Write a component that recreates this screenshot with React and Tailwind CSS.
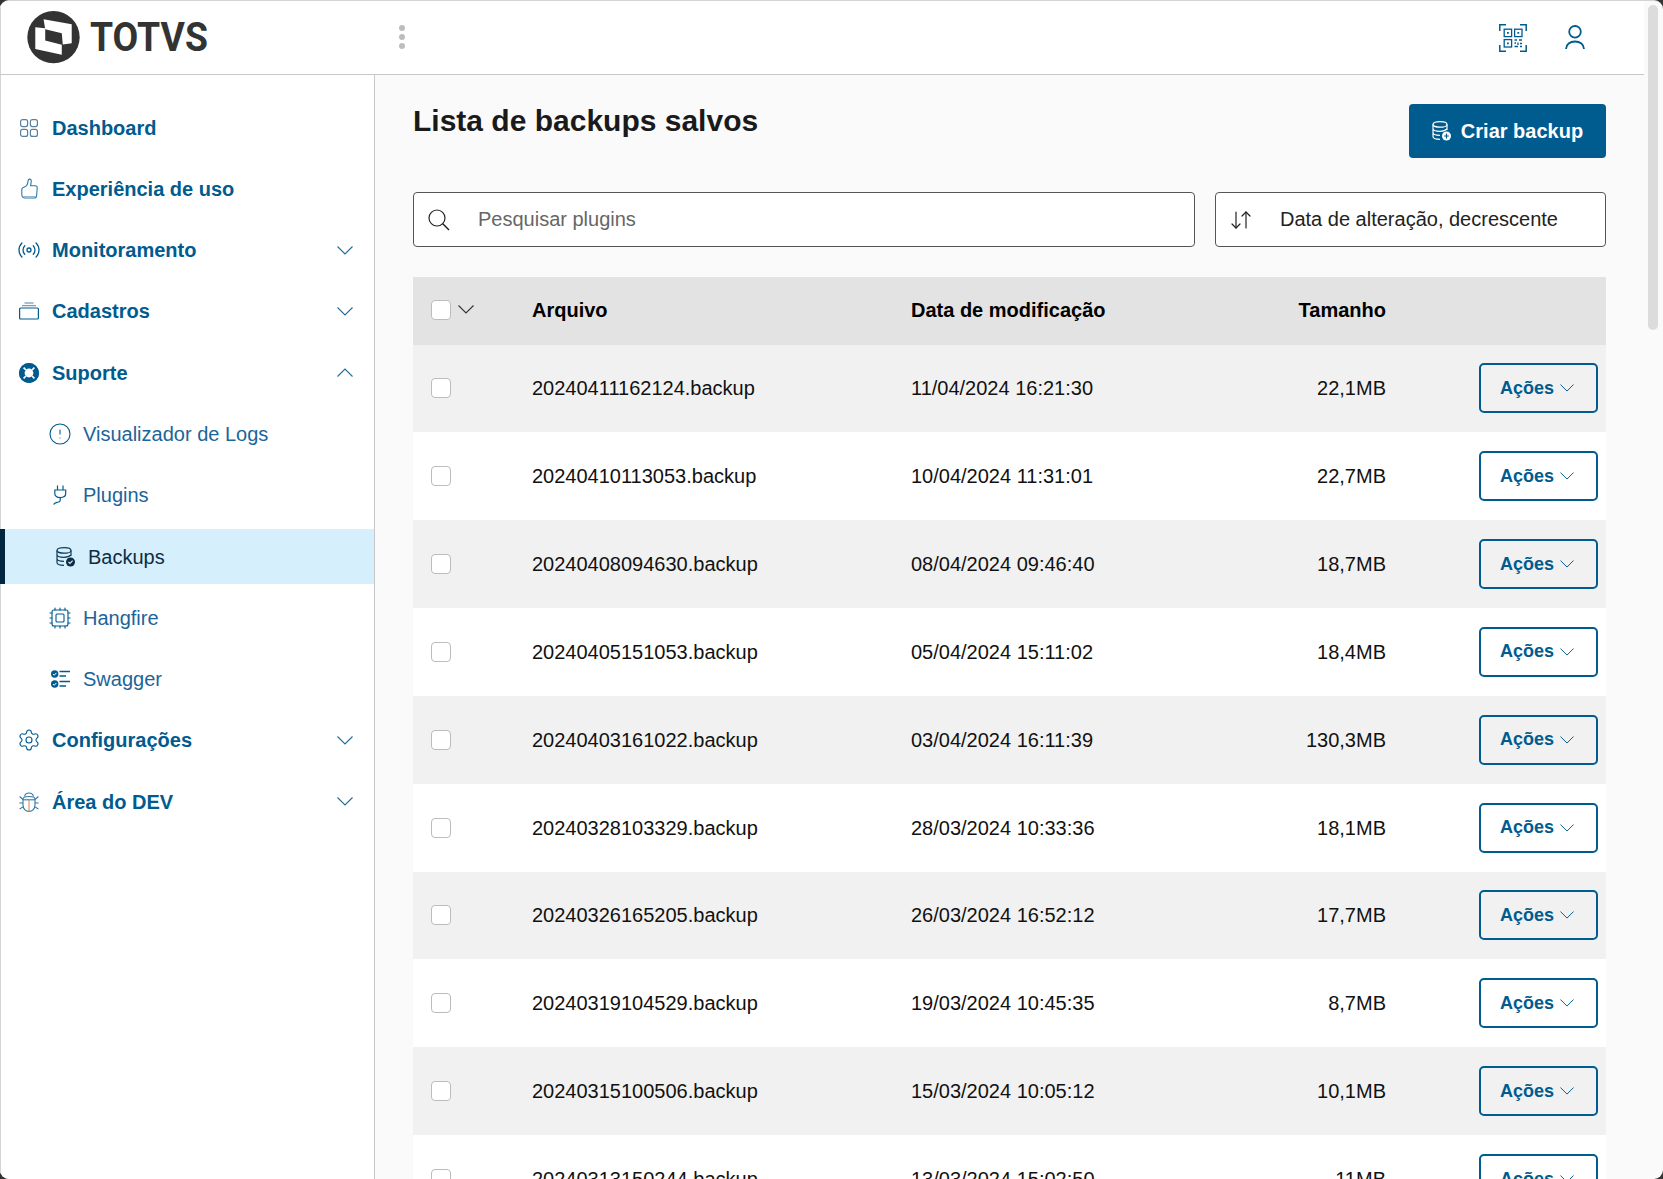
import { Radio, CircleAlert, Cpu, Settings, ArrowDownUp } from 'lucide-react'

const BLUE = '#005b8f'

const rows = [
  ['20240411162124.backup', '11/04/2024 16:21:30', '22,1MB'],
  ['20240410113053.backup', '10/04/2024 11:31:01', '22,7MB'],
  ['20240408094630.backup', '08/04/2024 09:46:40', '18,7MB'],
  ['20240405151053.backup', '05/04/2024 15:11:02', '18,4MB'],
  ['20240403161022.backup', '03/04/2024 16:11:39', '130,3MB'],
  ['20240328103329.backup', '28/03/2024 10:33:36', '18,1MB'],
  ['20240326165205.backup', '26/03/2024 16:52:12', '17,7MB'],
  ['20240319104529.backup', '19/03/2024 10:45:35', '8,7MB'],
  ['20240315100506.backup', '15/03/2024 10:05:12', '10,1MB'],
  ['20240313150244.backup', '13/03/2024 15:02:50', '11MB'],
]

function Chevron({ up, className }) {
  return (
    <svg viewBox="0 0 16 9" fill="none" stroke="currentColor" strokeWidth="1.1" className={className}>
      <path d={up ? 'M0.5 8.5L8 1l7.5 7.5' : 'M0.5 0.5L8 8l7.5-7.5'} />
    </svg>
  )
}

function Logo() {
  return (
    <svg viewBox="80 33 160 160" className="w-[53px] h-[53px] shrink-0">
      <circle cx="160" cy="112" r="79" fill="#333333" />
      <path d="M130 58L215 73V130L188 134L185 100L135 88Z" fill="#fff" />
      <path d="M105 82L135 85V122L185 135V165L105 148Z" fill="#fff" />
    </svg>
  )
}

function GridIcon() {
  return (
    <svg viewBox="0 0 18 18" fill="none" stroke="#5b7f9e" strokeWidth="1.2" className="w-[18px] h-[18px]">
      <rect x="0.6" y="0.6" width="7" height="7" rx="2" />
      <rect x="10.4" y="0.6" width="7" height="7" rx="2" />
      <rect x="0.6" y="10.4" width="7" height="7" rx="2" />
      <rect x="10.4" y="10.4" width="7" height="7" rx="2" />
    </svg>
  )
}

function ThumbIcon() {
  return (
    <svg viewBox="0 0 17 21" fill="none" stroke="#2f7aa8" strokeWidth="1.1" className="w-[17px] h-[21px]">
      <path d="M0.8 11.5C0.8 10 2 9.4 3.5 9L5.6 7.6C6.6 6.2 7 4.4 7.2 2.4C7.3 1 9.8 0.4 10.2 2.4C10.5 4 9.8 6 9.6 7.8H14.2C15.6 7.8 16.4 8.8 16.2 10L15.6 17.6C15.5 19 14.6 20 13 20H4.4C2 20 0.8 18.6 0.8 16.5Z" />
      <path d="M2.5 18.6H14.5" stroke="#9db9cc" strokeWidth="1.4" />
    </svg>
  )
}

function TrayIcon() {
  return (
    <svg viewBox="0 0 20 18" fill="none" className="w-5 h-[18px]">
      <rect x="0.6" y="6" width="18.8" height="11" rx="1" stroke={BLUE} strokeWidth="1.2" />
      <path d="M3 3.6H17" stroke="#7c9db5" strokeWidth="1.3" />
      <path d="M5.5 1H14.5" stroke="#7c9db5" strokeWidth="1.3" />
    </svg>
  )
}

function BuoyIcon() {
  return (
    <svg viewBox="0 0 20 20" className="w-5 h-5">
      <circle cx="10" cy="10" r="10" fill={BLUE} />
      <circle cx="10" cy="10" r="4.4" fill="#fff" />
      <path d="M4.6 4.6L7 7M15.4 4.6L13 7M4.6 15.4L7 13M15.4 15.4L13 13" stroke="#fff" strokeWidth="1.7" />
      <circle cx="10" cy="10" r="9.2" fill="none" stroke={BLUE} strokeWidth="1.6" />
    </svg>
  )
}

function PlugIcon() {
  return (
    <svg viewBox="0 0 14 20" fill="none" stroke={BLUE} strokeWidth="1.2" className="w-[14px] h-5">
      <path d="M4.5 0.5V5M10 0.5V5M1.8 5H12.7V8.5C12.7 11 10.5 12.5 7.2 12.5C4 12.5 1.8 11 1.8 8.5Z" />
      <path d="M7.2 12.5V15.5C7.2 17 6 17 4 17.4C2 17.8 1.2 18.2 0.6 19.5" />
    </svg>
  )
}

function ChecklistIcon() {
  return (
    <svg viewBox="0 0 19 18" className="w-[19px] h-[18px]">
      <circle cx="3.7" cy="4" r="3.7" fill={BLUE} />
      <circle cx="3.7" cy="14" r="3.7" fill={BLUE} />
      <path d="M1.9 4l1.3 1.3 2.2-2.4M1.9 14l1.3 1.3 2.2-2.4" fill="none" stroke="#fff" strokeWidth="1" />
      <path d="M8.5 1.5H19M8.5 6H15M8.5 11.5H19M8.5 16H15" stroke={BLUE} strokeWidth="1.5" />
    </svg>
  )
}

function BugIcon() {
  return (
    <svg viewBox="0 0 20 20" fill="none" stroke="#2f7aa8" strokeWidth="1.1" className="w-5 h-5">
      <path d="M5.5 4.5C6 2 7.8 1 10 1C12.2 1 14 2 14.5 4.5" />
      <path d="M4 7C4 5.4 5.4 4.5 10 4.5C14.6 4.5 16 5.4 16 7V13C16 16.5 13.5 19.4 10 19.4C6.5 19.4 4 16.5 4 13Z" />
      <path d="M4 7.8H16" />
      <path d="M10 7.8V19.4" stroke="#d98b6a" />
      <path d="M0.6 4.5L4 7.5M19.4 4.5L16 7.5M0.4 11H4M19.6 11H16M0.6 17L4.4 14.6M19.4 17L15.6 14.6" />
    </svg>
  )
}

function SearchIcon() {
  return (
    <svg viewBox="0 0 22 22" fill="none" stroke="#222" strokeWidth="1.2" className="w-[22px] h-[22px]">
      <circle cx="9" cy="9" r="8" />
      <path d="M14.8 14.8L21 21" strokeWidth="1.5" />
    </svg>
  )
}

function DbIcon({ stroke, badge, plus }) {
  return (
    <svg viewBox="0 0 19 20" fill="none" className="w-[19px] h-5">
      <ellipse cx="8" cy="3.4" rx="7" ry="2.8" stroke={stroke} strokeWidth="1.2" />
      <path d="M1 3.4V15.6C1 17.2 4 18.4 8 18.4M15 3.4V9M1 7.5C1 9.1 4 10.3 8 10.3C10.5 10.3 13.5 9.6 15 8M1 11.6C1 13.2 4 14.4 8 14.4" stroke={stroke} strokeWidth="1.2" />
      <circle cx="14.5" cy="15" r="4.5" fill={badge} />
      {plus ? (
        <path d="M14.5 12.6V17.4M12.1 15H16.9" stroke="#005b8f" strokeWidth="1.2" />
      ) : (
        <path d="M12.5 15l1.5 1.5 2.6-2.8" stroke="#d6effc" strokeWidth="1.2" />
      )}
    </svg>
  )
}

function QrIcon() {
  return (
    <svg viewBox="0 0 28 28" fill="none" stroke={BLUE} className="w-7 h-7">
      <path d="M0.8 7V0.8H7M21 0.8H27.2V7M0.8 21V27.2H7M21 27.2H27.2V21" strokeWidth="1.5" />
      <rect x="5.2" y="5.2" width="7.4" height="7.4" strokeWidth="1.3" />
      <rect x="15.6" y="5.2" width="7.4" height="7.4" strokeWidth="1.3" />
      <rect x="5.2" y="15.6" width="7.4" height="7.4" strokeWidth="1.3" />
      <path d="M8 8h1.8v1.8H8zM18.4 8h1.8v1.8h-1.8zM8 18.4h1.8v1.8H8z" fill={BLUE} stroke="none" />
      <path d="M15.5 16H18M20 16H23M15.5 19H17M19 18.5V21M21 19.5H23M15.5 22.5H19M21 22.5H23" strokeWidth="1.3" />
    </svg>
  )
}

function UserIcon() {
  return (
    <svg viewBox="0 0 20 25" fill="none" stroke={BLUE} strokeWidth="1.8" className="w-5 h-[25px]">
      <circle cx="10" cy="6.8" r="5.8" />
      <path d="M1 24C1 19.5 5 16.5 10 16.5C15 16.5 19 19.5 19 24" />
    </svg>
  )
}

function MenuItem({ icon, label, chevron }) {
  return (
    <div className="h-[55px] flex items-center pl-[18px] pr-[21px] text-[#005b8f]">
      <span className="w-5 flex justify-center shrink-0">{icon}</span>
      <span className="ml-[13px] font-bold text-[20px]">{label}</span>
      {chevron && <Chevron up={chevron === 'up'} className="ml-auto w-4 h-[9px] text-[#1f6c98]" />}
    </div>
  )
}

function SubItem({ icon, label }) {
  return (
    <div className="h-[55px] flex items-center pl-[49px] text-[#1a659a]">
      <span className="w-5 flex justify-center shrink-0">{icon}</span>
      <span className="ml-[13px] text-[20px]">{label}</span>
    </div>
  )
}

function Sidebar() {
  const iconClass = 'w-6 h-6 shrink-0 text-[#005b8f]'
  return (
    <aside className="w-[375px] shrink-0 bg-white border-l border-r border-l-[#d4d4d4] border-r-[#c8c8c8] pt-[25px] flex flex-col gap-[6.3px]">
      <MenuItem icon={<GridIcon />} label="Dashboard" />
      <MenuItem icon={<ThumbIcon />} label="Experiência de uso" />
      <MenuItem icon={<Radio strokeWidth={1.3} className={iconClass} />} label="Monitoramento" chevron="down" />
      <MenuItem icon={<TrayIcon />} label="Cadastros" chevron="down" />
      <MenuItem icon={<BuoyIcon />} label="Suporte" chevron="up" />
      <SubItem icon={<CircleAlert strokeWidth={1.1} className={iconClass} />} label="Visualizador de Logs" />
      <SubItem icon={<PlugIcon />} label="Plugins" />
      <div className="h-[55px] flex items-center pl-[50px] bg-[#d6effc] border-l-[5px] border-[#00273f] -ml-px text-[#0d2d44]">
        <span className="w-5 flex justify-center shrink-0">
          <DbIcon stroke="#0d3b58" badge="#0d2d44" />
        </span>
        <span className="ml-[13px] text-[20px]">Backups</span>
      </div>
      <SubItem icon={<Cpu strokeWidth={1.1} className={iconClass} />} label="Hangfire" />
      <SubItem icon={<ChecklistIcon />} label="Swagger" />
      <MenuItem icon={<Settings strokeWidth={1.1} className={iconClass} />} label="Configurações" chevron="down" />
      <MenuItem icon={<BugIcon />} label="Área do DEV" chevron="down" />
    </aside>
  )
}

function Checkbox() {
  return <span className="block w-5 h-5 rounded-[4px] border border-[#b9bdc1] bg-white" />
}

function Row({ row, index }) {
  return (
    <div className={`h-[87.85px] shrink-0 grid grid-cols-[119px_379px_220px_255px_1fr] items-center text-[20px] text-[#111] ${index % 2 === 0 ? 'bg-[#f1f1f1]' : 'bg-white'}`}>
      <div className="pl-[18px]"><Checkbox /></div>
      <div>{row[0]}</div>
      <div>{row[1]}</div>
      <div className="text-right">{row[2]}</div>
      <div className="flex justify-end pr-[8px]">
        <button className="w-[119px] h-[50px] rounded-[5px] border-2 border-[#005b8f] flex items-center justify-center gap-[6px] pr-[3px] text-[#005b8f] font-bold text-[18px]">
          Ações
          <Chevron className="w-[14px] h-[8px]" />
        </button>
      </div>
    </div>
  )
}

export default function App() {
  return (
    <div className="h-screen overflow-hidden bg-[#333] font-['Liberation_Sans',Arial,sans-serif]">
      <div className="h-full rounded-[9px] overflow-hidden flex bg-[#fafafa] border-t border-[#d4d4d4]">
        <div className="flex-1 min-w-0 flex flex-col">
          <header className="h-[73px] shrink-0 bg-white border-l border-l-[#d4d4d4] border-b border-b-[#c8c8c8] box-content flex items-center pr-[59px]">
            <div className="w-[374px] shrink-0 flex items-center pl-[26px]">
              <Logo />
              <span className="ml-[10px] font-['Roboto',sans-serif] font-bold text-[41px] leading-none text-[#333] origin-left scale-x-[0.91]">TOTVS</span>
            </div>
            <div className="ml-[24px] -mt-px flex flex-col gap-[3px]">
              <span className="w-[6px] h-[6px] rounded-full bg-[#bdbdbd]" />
              <span className="w-[6px] h-[6px] rounded-full bg-[#bdbdbd]" />
              <span className="w-[6px] h-[6px] rounded-full bg-[#bdbdbd]" />
            </div>
            <div className="ml-auto flex items-center gap-[38px]">
              <QrIcon />
              <UserIcon />
            </div>
          </header>
          <div className="flex-1 min-h-0 flex">
            <Sidebar />
            <main className="flex-1 min-w-0 px-[38px] pt-[29px] overflow-hidden">
              <div className="flex items-start justify-between">
                <h1 className="font-bold text-[30px] leading-[34px] text-[#1a1a1a]">Lista de backups salvos</h1>
                <button className="w-[197px] h-[54px] rounded-[4px] bg-[#005b8f] text-white font-bold text-[20px] flex items-center justify-center gap-[10px]">
                  <DbIcon stroke="#fff" badge="#fff" plus />
                  Criar backup
                </button>
              </div>
              <div className="mt-[34px] flex gap-[20px]">
                <div className="flex-1 h-[55px] rounded-[4px] border border-[#555] bg-white flex items-center pl-[14px]">
                  <SearchIcon />
                  <input placeholder="Pesquisar plugins" className="ml-[28px] -mt-[2px] flex-1 outline-none text-[20px] placeholder:text-[#666]" />
                </div>
                <button className="w-[391px] h-[55px] rounded-[4px] border border-[#555] bg-white flex items-center pl-[13px] text-[20px] text-[#222]">
                  <ArrowDownUp strokeWidth={1.2} className="w-[24px] h-[24px] text-[#222]" />
                  <span className="ml-[27px] -mt-[2px]">Data de alteração, decrescente</span>
                </button>
              </div>
              <div className="mt-[30px] flex flex-col">
                <div className="h-[67.5px] shrink-0 bg-[#e3e3e3] grid grid-cols-[119px_379px_220px_255px_1fr] items-center text-[20px] font-bold text-black pb-[2px]">
                  <div className="pl-[18px] flex items-center gap-[7px]">
                    <Checkbox />
                    <Chevron className="w-[16px] h-[9px] text-[#333]" />
                  </div>
                  <div>Arquivo</div>
                  <div>Data de modificação</div>
                  <div className="text-right">Tamanho</div>
                  <div />
                </div>
                {rows.map((row, index) => (
                  <Row key={row[0]} row={row} index={index} />
                ))}
              </div>
            </main>
          </div>
        </div>
        <div className="w-[19px] shrink-0 pt-[4px] pl-[4px]">
          <div className="w-[10px] h-[325px] rounded-full bg-[#dcdcdc]" />
        </div>
      </div>
    </div>
  )
}
